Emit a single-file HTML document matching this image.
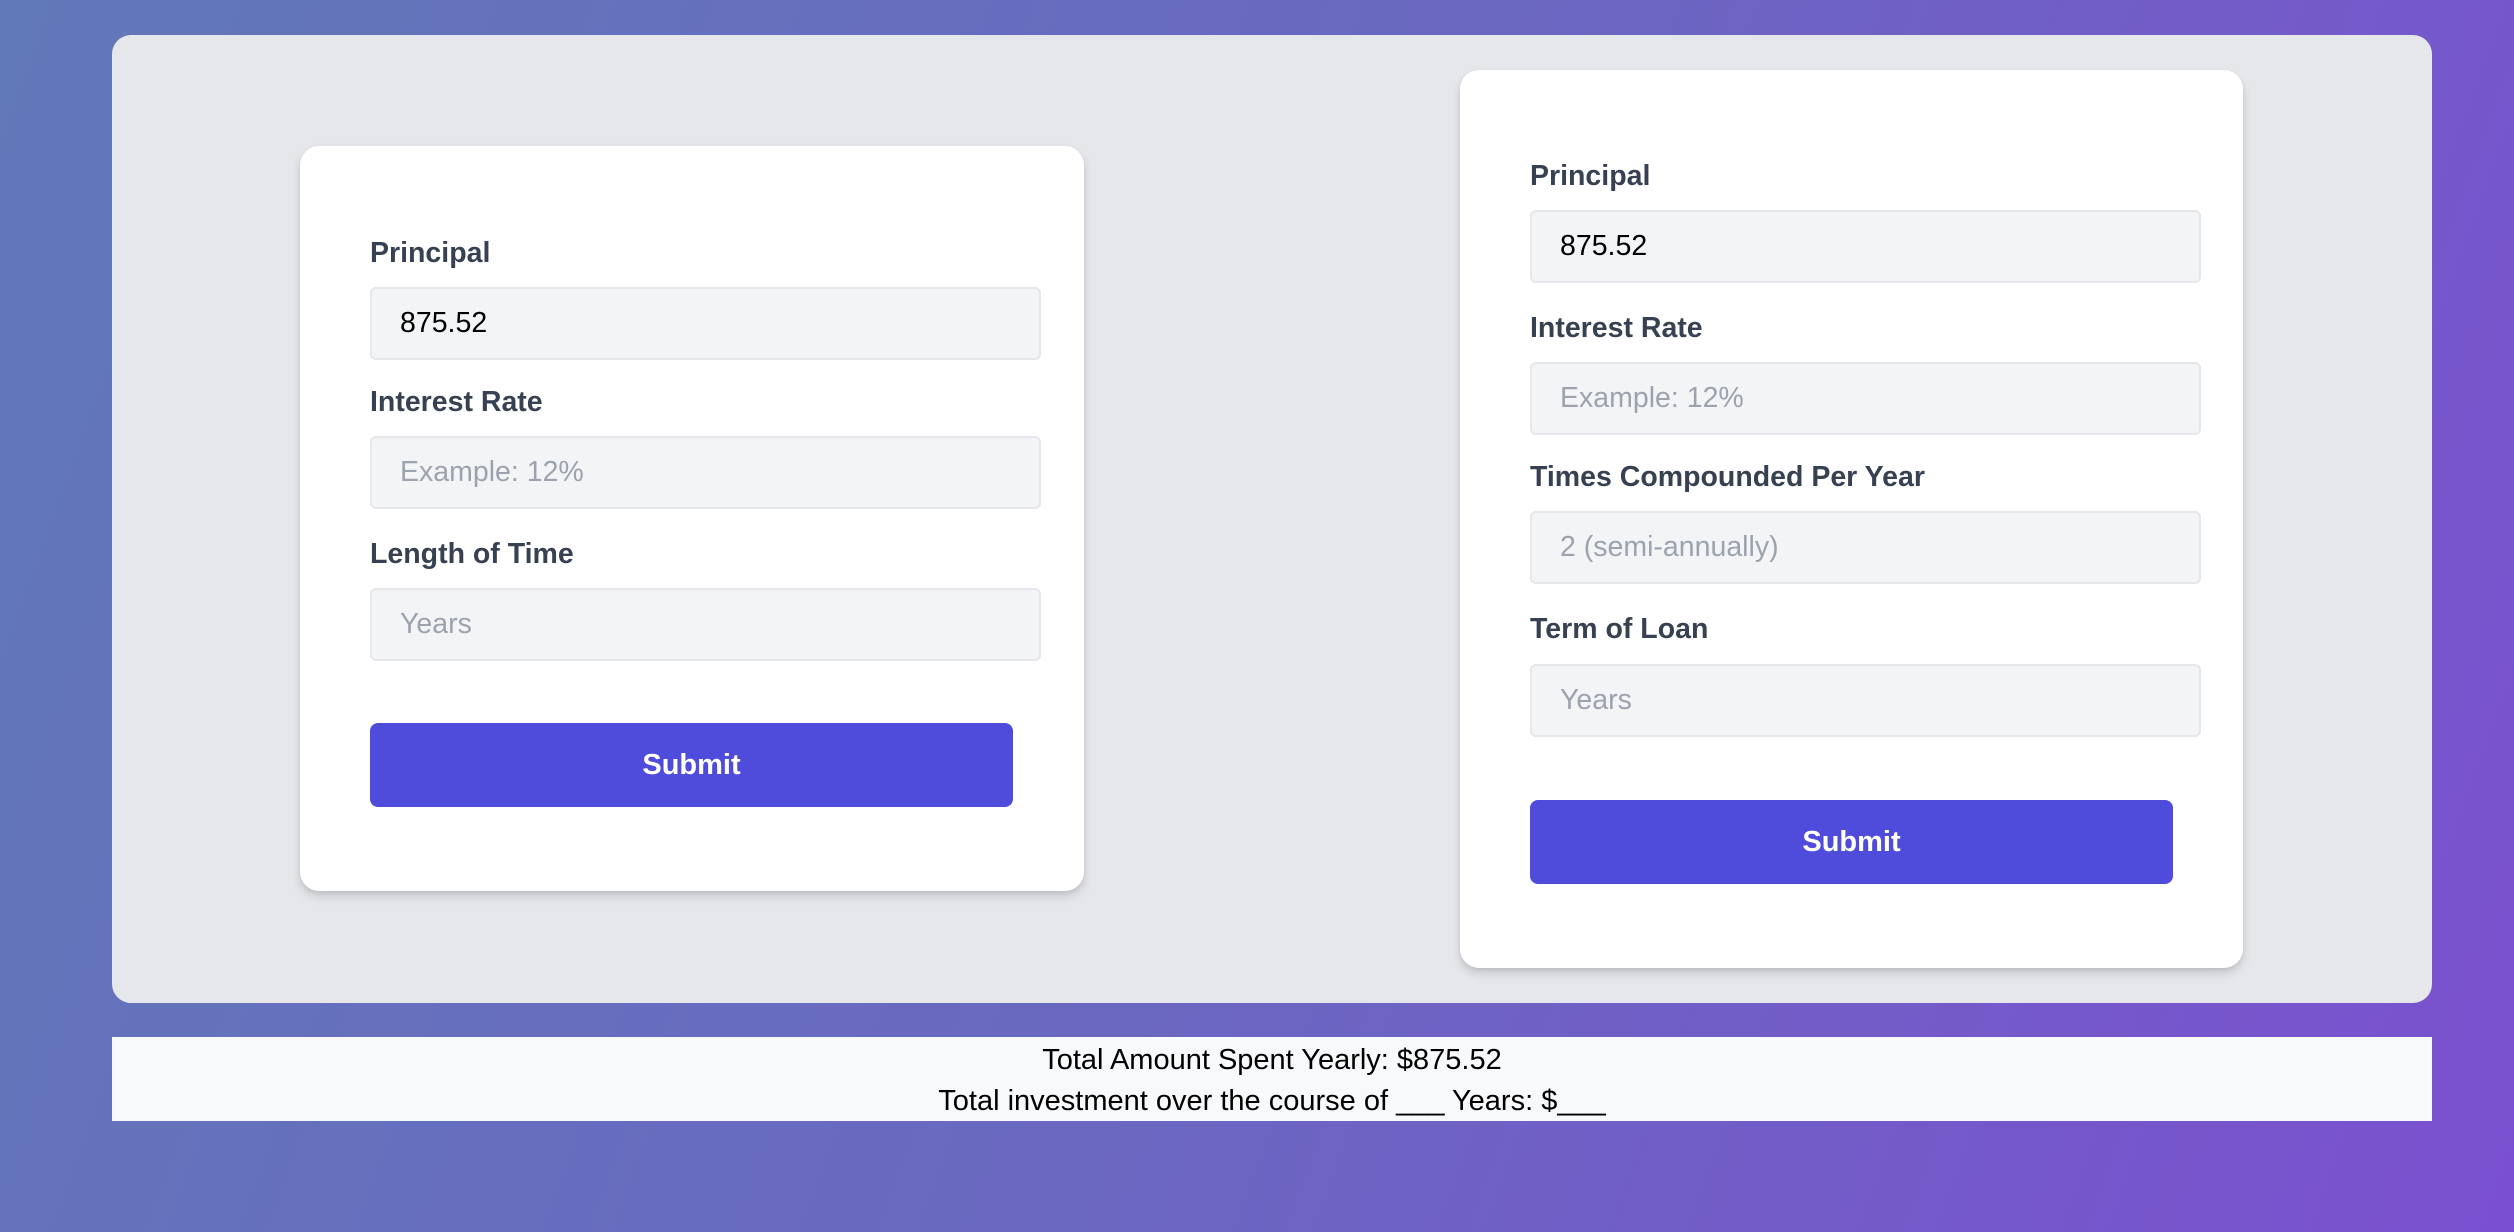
<!DOCTYPE html>
<html><head><meta charset="utf-8"><style>
*{box-sizing:border-box;margin:0;padding:0}
body{width:2514px;height:1232px;overflow:hidden;position:relative;background:linear-gradient(110deg,#6178b9 0%,#6a68c0 50%,#7b50d0 100%);font-family:"Liberation Sans",sans-serif}
.panel{position:absolute;left:112px;top:35px;width:2320px;height:968px;background:#e5e7eb;border-radius:19px}
.card{position:absolute;background:#fff;border-radius:19px;box-shadow:0 6px 10px rgba(0,0,0,.12),0 2px 4px rgba(0,0,0,.08)}
.lbl{position:absolute;font-weight:bold;font-size:28.5px;color:#374151;line-height:30px}
.inp{position:absolute;background:#f3f4f6;border:2px solid #e5e7eb;border-radius:6px;height:73px;font-size:28.5px;padding-left:28px;line-height:69px;color:#9ca3af}
.inp.v{color:#000}
.btn{position:absolute;background:#4f4cdc;border-radius:8px;color:#fff;font-weight:bold;font-size:29px;text-align:center;line-height:85px;height:84px}
.res{position:absolute;left:112px;top:1037px;width:2320px;height:84px;background:#f8f9fb;text-align:center;font-size:29px;color:#000}
</style></head><body>
<div class="panel"></div>
<div class="card" style="left:300px;top:146px;width:784px;height:745px"></div>
<div class="lbl" style="left:370px;top:238px">Principal</div>
<div class="inp v" style="left:370px;top:287px;width:671px">875.52</div>
<div class="lbl" style="left:370px;top:387px">Interest Rate</div>
<div class="inp" style="left:370px;top:436px;width:671px">Example: 12%</div>
<div class="lbl" style="left:370px;top:539px">Length of Time</div>
<div class="inp" style="left:370px;top:588px;width:671px">Years</div>
<div class="btn" style="left:370px;top:723px;width:643px">Submit</div>

<div class="card" style="left:1460px;top:70px;width:783px;height:898px"></div>
<div class="lbl" style="left:1530px;top:161px">Principal</div>
<div class="inp v" style="left:1530px;top:210px;width:671px">875.52</div>
<div class="lbl" style="left:1530px;top:313px">Interest Rate</div>
<div class="inp" style="left:1530px;top:362px;width:671px">Example: 12%</div>
<div class="lbl" style="left:1530px;top:462px">Times Compounded Per Year</div>
<div class="inp" style="left:1530px;top:511px;width:671px">2 (semi-annually)</div>
<div class="lbl" style="left:1530px;top:614px">Term of Loan</div>
<div class="inp" style="left:1530px;top:664px;width:671px">Years</div>
<div class="btn" style="left:1530px;top:800px;width:643px">Submit</div>

<div class="res"><div style="position:absolute;left:0;right:0;top:3px;line-height:40px">Total Amount Spent Yearly: $875.52</div><div style="position:absolute;left:0;right:0;top:44px;line-height:40px">Total investment over the course of ___ Years: $___</div></div>
</body></html>
